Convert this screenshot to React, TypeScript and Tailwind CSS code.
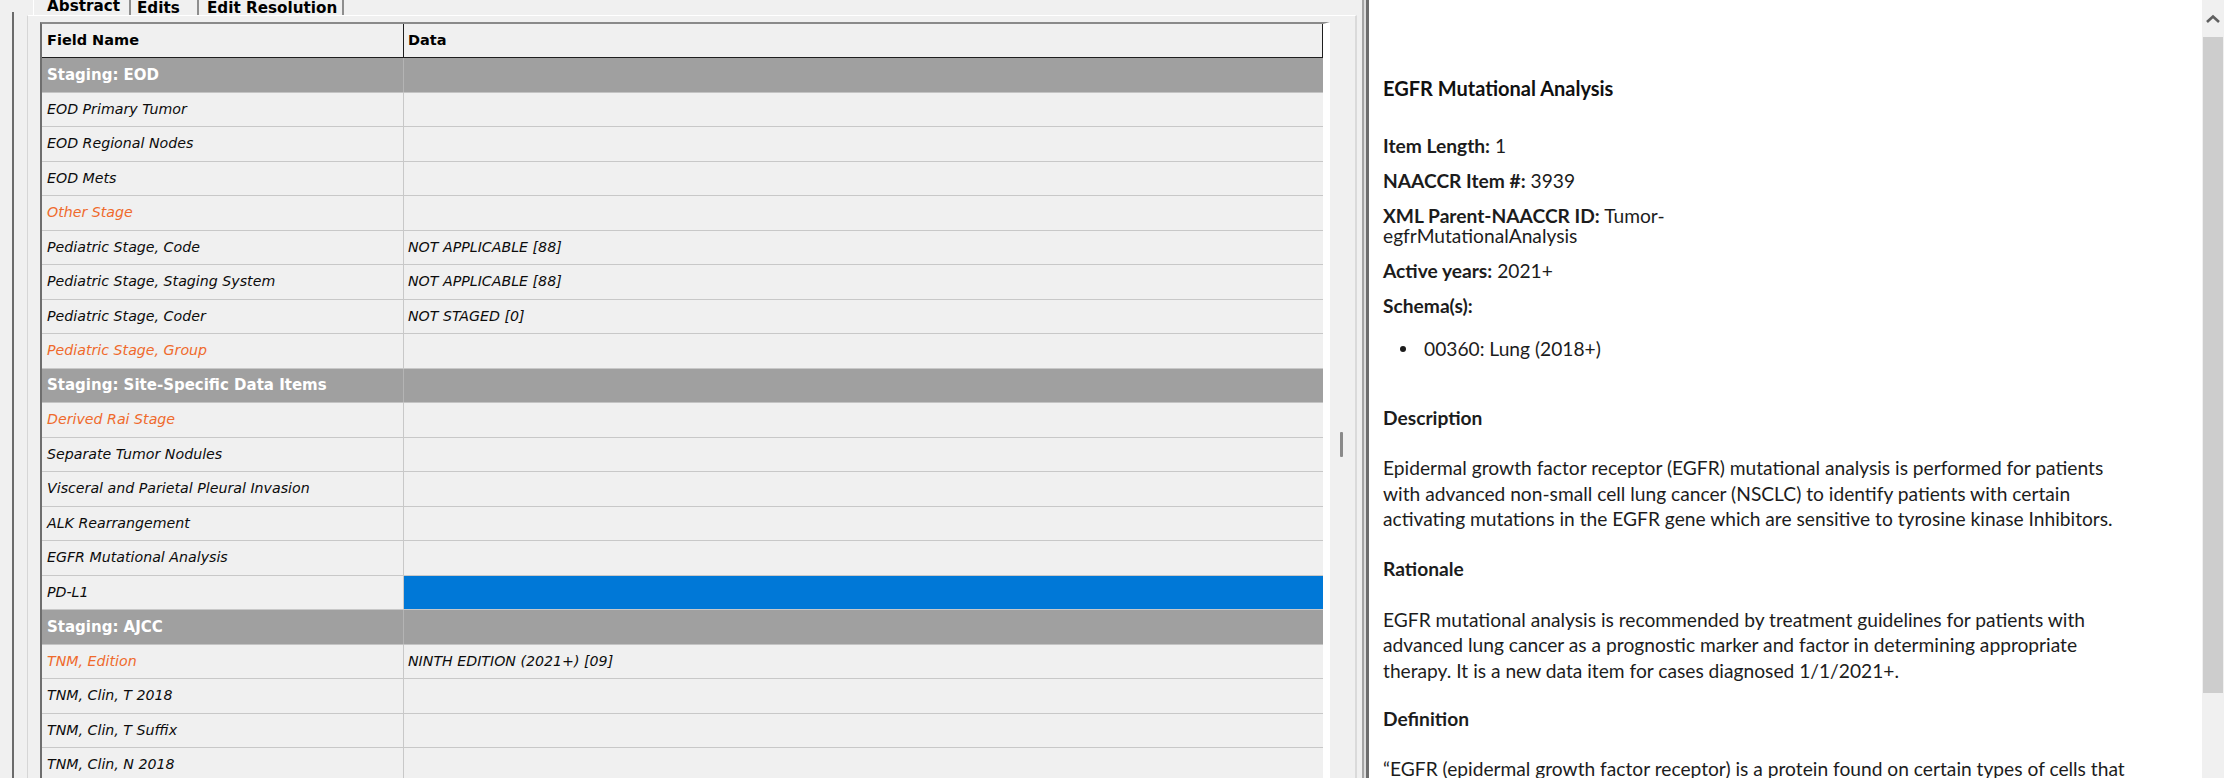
import React from "react";

type Row = { g?: boolean; name: string; data?: string; orange?: boolean; sel?: boolean };

const rows: Row[] = [
  { g: true, name: "Staging: EOD" },
  { name: "EOD Primary Tumor" },
  { name: "EOD Regional Nodes" },
  { name: "EOD Mets" },
  { name: "Other Stage", orange: true },
  { name: "Pediatric Stage, Code", data: "NOT APPLICABLE [88]" },
  { name: "Pediatric Stage, Staging System", data: "NOT APPLICABLE [88]" },
  { name: "Pediatric Stage, Coder", data: "NOT STAGED [0]" },
  { name: "Pediatric Stage, Group", orange: true },
  { g: true, name: "Staging: Site-Specific Data Items" },
  { name: "Derived Rai Stage", orange: true },
  { name: "Separate Tumor Nodules" },
  { name: "Visceral and Parietal Pleural Invasion" },
  { name: "ALK Rearrangement" },
  { name: "EGFR Mutational Analysis" },
  { name: "PD-L1", sel: true },
  { g: true, name: "Staging: AJCC" },
  { name: "TNM, Edition", orange: true, data: "NINTH EDITION (2021+) [09]" },
  { name: "TNM, Clin, T 2018" },
  { name: "TNM, Clin, T Suffix" },
  { name: "TNM, Clin, N 2018" },
];

function TableRow({ r }: { r: Row }) {
  if (r.g) {
    return (
      <div className="flex h-[34.5px] shrink-0 bg-[#a0a0a0] border-b border-b-[#c4c4c4]">
        <div className="w-[361px] shrink-0 flex items-center pl-[5px] text-white font-bold text-[15px]">
          {r.name}
        </div>
        <div className="flex-1 border-l border-l-[#b4b4b4]" />
      </div>
    );
  }
  return (
    <div className="flex h-[34.5px] shrink-0 border-b border-b-[#c8c8c8]">
      <div
        className={
          r.orange
            ? "w-[361px] shrink-0 flex items-center pl-[5px] italic text-[14.2px] text-[#ef6a2c]"
            : "w-[361px] shrink-0 flex items-center pl-[5px] italic text-[14.2px] text-[#0c0c0c]"
        }
      >
        {r.name}
      </div>
      <div
        className={
          r.sel
            ? "flex-1 border-l border-l-[#c8c8c8] bg-[#0078d7]"
            : "flex-1 border-l border-l-[#c8c8c8] flex items-center pl-[4px] italic text-[14.2px] text-[#0c0c0c]"
        }
      >
        {r.data ?? ""}
      </div>
    </div>
  );
}

function Label({ k, v }: { k: string; v: string }) {
  return (
    <div className="leading-[20px] mb-[15px]">
      <span className="font-bold">{k}</span> {v}
    </div>
  );
}

export default function App() {
  return (
    <div className="w-[2224px] h-[778px] overflow-hidden flex bg-[#f0f0f0]">
      {/* LEFT */}
      <div className="w-[1362px] h-full flex shrink-0 font-['DejaVu_Sans',sans-serif]">
        <div className="w-[12px] shrink-0" />
        <div className="w-[2px] shrink-0 mt-[12px] bg-[#6b6b6b]" />
        <div className="w-[13px] shrink-0" />
        <div className="w-[1330px] shrink-0 flex flex-col">
          {/* tab strip */}
          <div className="h-[15px] shrink-0 overflow-hidden flex items-end pl-[6px]">
            <div className="h-[32px] w-[98px] shrink-0 pl-[13px] pt-[15px] border-l border-l-white border-r-2 border-r-[#8e8e8e] text-[15.2px] font-bold leading-[16px] text-black whitespace-nowrap">
              Abstract
            </div>
            <div className="h-[30px] w-[68px] shrink-0 pl-[6px] pt-[15px] border-r-2 border-r-[#8e8e8e] text-[15.2px] font-bold leading-[16px] text-black whitespace-nowrap">
              Edits
            </div>
            <div className="h-[30px] w-[145px] shrink-0 pl-[8px] pt-[15px] border-r-2 border-r-[#8e8e8e] text-[15.2px] font-bold leading-[16px] text-black whitespace-nowrap">
              Edit Resolution
            </div>
          </div>
          {/* tab page */}
          <div className="flex-1 flex border-t border-t-white border-l border-l-[#d6d6d6] border-r-2 border-r-[#dadada] min-h-0">
            <div className="w-[12px] shrink-0" />
            <div className="w-[1290px] shrink-0 flex flex-col pt-[6px] min-h-0">
              <div className="flex-1 flex flex-col border-t-2 border-t-[#8a8a8a] border-l-2 border-l-[#6e6e6e] border-r-[7px] border-r-white overflow-hidden">
                {/* header */}
                <div className="flex h-[34px] shrink-0 border-b border-b-[#1e1e1e]">
                  <div className="w-[361px] shrink-0 flex items-center pl-[5px] font-bold text-[14.5px] text-black">
                    Field Name
                  </div>
                  <div className="flex-1 flex items-center pl-[4px] border-l border-l-[#1e1e1e] border-r border-r-[#1e1e1e] font-bold text-[14.5px] text-black">
                    Data
                  </div>
                </div>
                {rows.map((r, i) => (
                  <TableRow key={i} r={r} />
                ))}
              </div>
            </div>
            <div className="flex-1">
              <div className="mt-[416px] ml-[10px] w-[3px] h-[25px] bg-[#8a8a8a] rounded-[1px]" />
            </div>
          </div>
        </div>
      </div>
      {/* splitter double line */}
      <div className="w-[2px] shrink-0 bg-[#a6a6a6]" />
      <div className="w-[2px] shrink-0 bg-[#dedede]" />
      <div className="w-[3px] shrink-0 bg-[#6e6e6e]" />
      {/* RIGHT */}
      <div className="flex-1 h-full bg-white flex min-w-0">
        <div className="flex-1 pl-[14px] pt-[78px] text-[19.2px] text-[#1c1c1c] font-['Lato',sans-serif] overflow-hidden">
          <div className="font-bold text-[20px] leading-[20px] mb-[38px] text-[#111]">EGFR Mutational Analysis</div>
          <Label k="Item Length:" v="1" />
          <Label k="NAACCR Item #:" v="3939" />
          <div className="leading-[20px] mb-[15px]">
            <span className="font-bold">XML Parent-NAACCR ID:</span> Tumor-
            <br />
            egfrMutationalAnalysis
          </div>
          <Label k="Active years:" v="2021+" />
          <div className="leading-[20px] font-bold">Schema(s):</div>
          <ul className="mt-[23px] leading-[20px]">
            <li className="flex items-center">
              <span className="ml-[17px] w-[6px] h-[6px] rounded-full bg-[#1c1c1c] shrink-0" />
              <span className="ml-[18px]">00360: Lung (2018+)</span>
            </li>
          </ul>
          <div className="mt-[49px] leading-[20px] font-bold">Description</div>
          <p className="mt-[27px] leading-[25.5px] w-[800px]">
            Epidermal growth factor receptor (EGFR) mutational analysis is performed for patients
            <br />
            with advanced non-small cell lung cancer (NSCLC) to identify patients with certain
            <br />
            activating mutations in the EGFR gene which are sensitive to tyrosine kinase Inhibitors.
          </p>
          <div className="mt-[27px] leading-[20px] font-bold">Rationale</div>
          <p className="mt-[28px] leading-[25.5px] w-[800px]">
            EGFR mutational analysis is recommended by treatment guidelines for patients with
            <br />
            advanced lung cancer as a prognostic marker and factor in determining appropriate
            <br />
            therapy. It is a new data item for cases diagnosed 1/1/2021+.
          </p>
          <div className="mt-[26px] leading-[20px] font-bold">Definition</div>
          <p className="mt-[27px] leading-[25.5px] w-[820px] whitespace-nowrap">
            “EGFR (epidermal growth factor receptor) is a protein found on certain types of cells that
          </p>
        </div>
        {/* scrollbar */}
        <div className="w-[22px] shrink-0 h-full flex flex-col bg-[#f0f0f0]">
          <div className="h-[37px] shrink-0 flex items-center justify-center">
            <svg width="16" height="10" viewBox="0 0 16 10">
              <path d="M2 8 L8 2.5 L14 8" fill="none" stroke="#606060" strokeWidth="2.6" />
            </svg>
          </div>
          <div className="h-[656px] shrink-0 ml-[1px] mr-[1px] bg-[#cdcdcd]" />
        </div>
      </div>
    </div>
  );
}
